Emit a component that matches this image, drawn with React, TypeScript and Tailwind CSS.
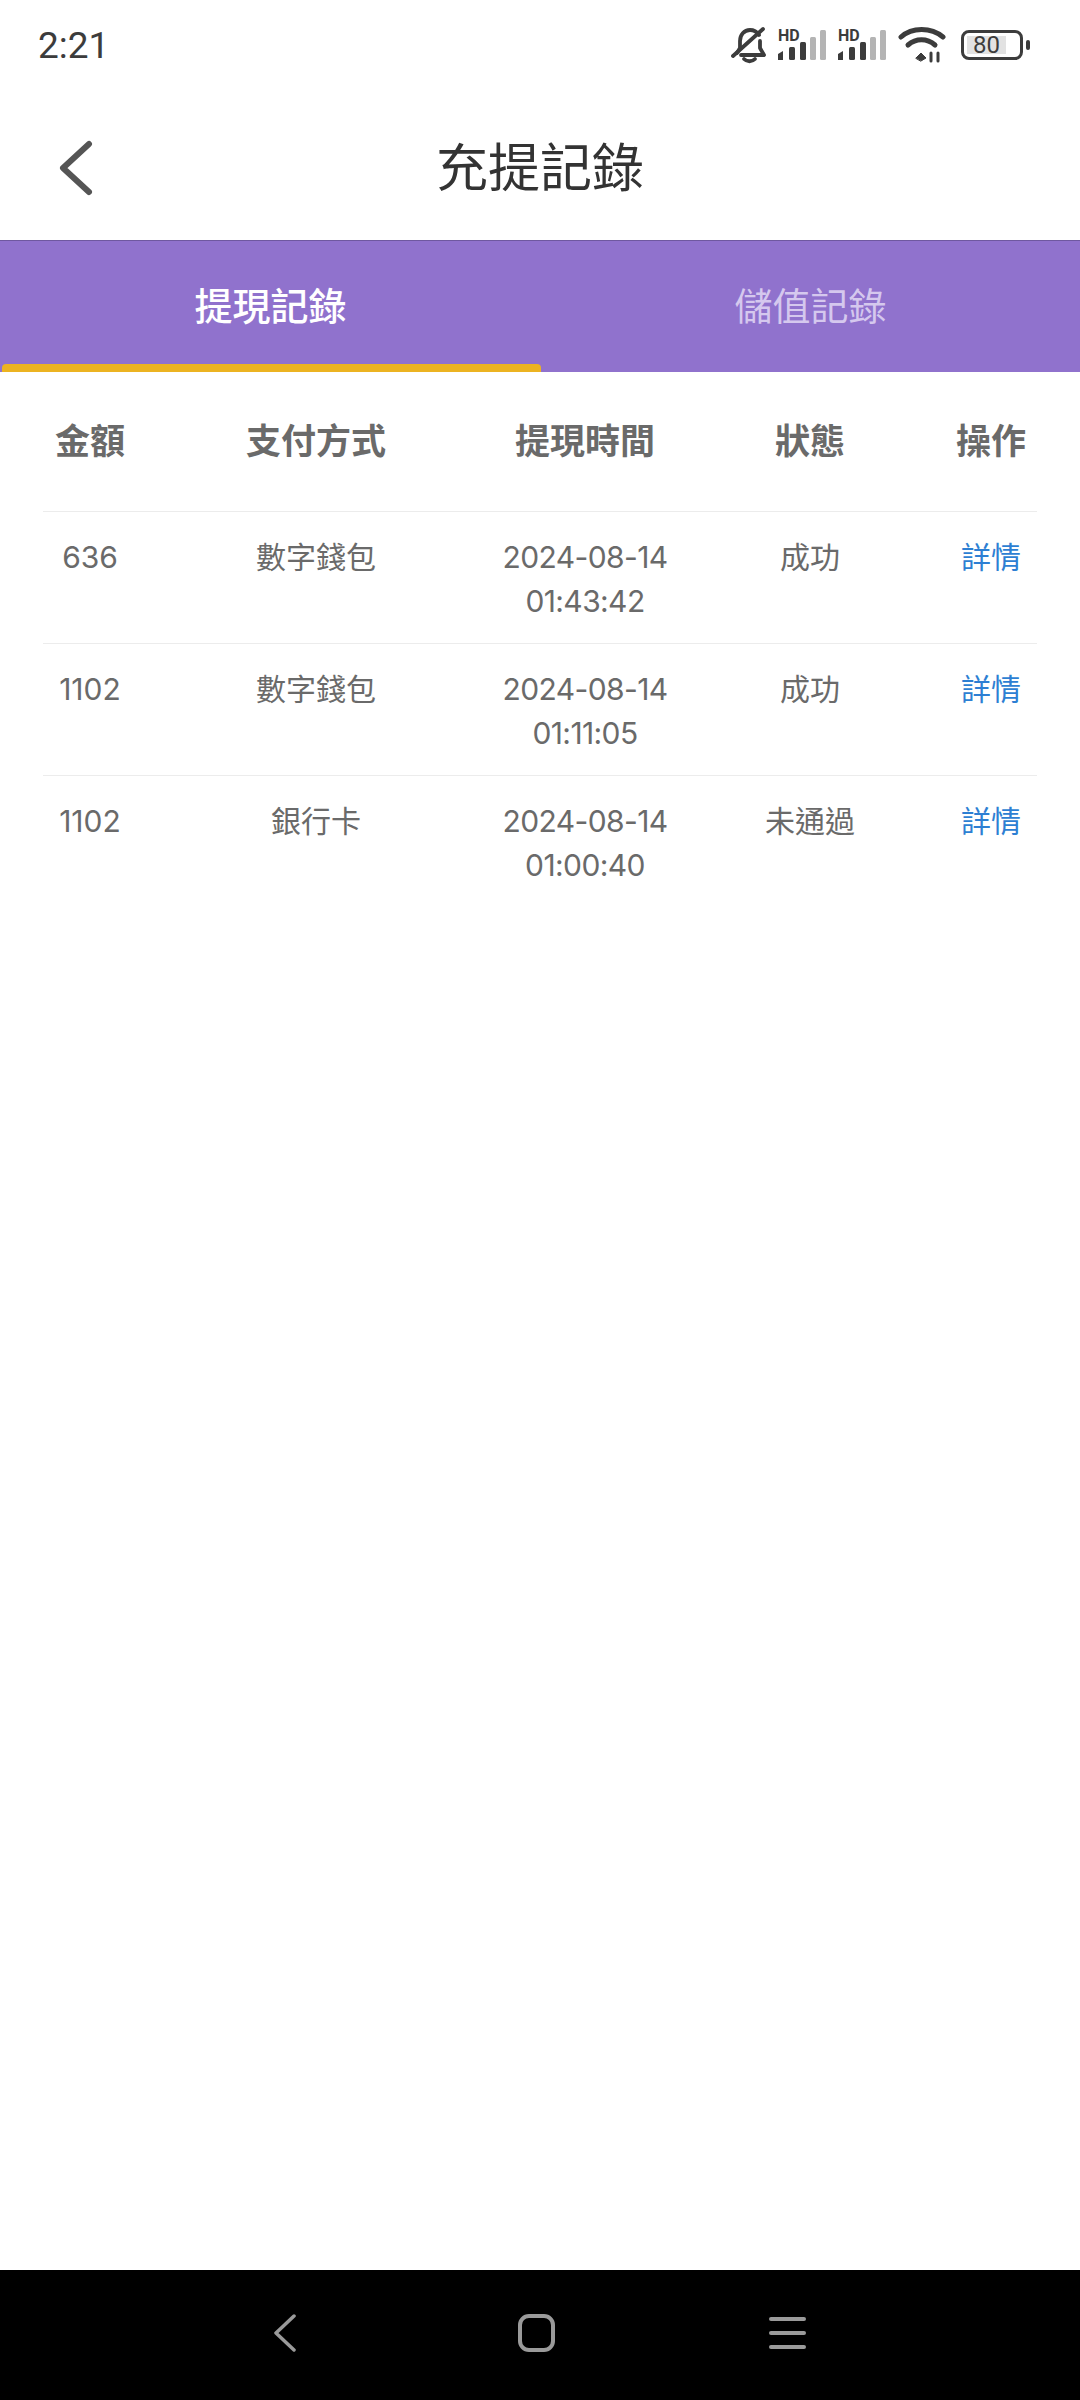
const cjk = "font-['Inter','Noto_Sans_CJK_TC',sans-serif]"

const records = [
  { amount: '636', method: '數字錢包', date: '2024-08-14', time: '01:43:42', status: '成功' },
  { amount: '1102', method: '數字錢包', date: '2024-08-14', time: '01:11:05', status: '成功' },
  { amount: '1102', method: '銀行卡', date: '2024-08-14', time: '01:00:40', status: '未通過' },
]

const columns = 'grid grid-cols-[94px_358px_180px_270px_92px] text-center'

function Signal() {
  return (
    <svg width="48" height="40" viewBox="0 -4 48 40" className="text-[#3c3c3c]">
      <text x="0" y="12" fontSize="16" fontWeight="700" fontFamily="Roboto, sans-serif" fill="currentColor">
        HD
      </text>
      <path d="M0 25 L5 22 V31 H0 Z" fill="currentColor" />
      <rect x="11" y="18" width="6" height="13" rx="1.5" fill="currentColor" />
      <rect x="22" y="13" width="6" height="18" rx="1.5" fill="currentColor" />
      <rect x="32" y="8" width="6" height="23" rx="1.5" fill="#b4b4b4" />
      <rect x="42" y="1" width="6" height="30" rx="1.5" fill="#b4b4b4" />
    </svg>
  )
}

function StatusBar() {
  return (
    <div className="flex h-[90px] items-center justify-between pl-[38px] pr-[50px] text-[#3c3c3c]">
      <span className="font-['Roboto',sans-serif] text-[37px] leading-none">2:21</span>
      <div className="flex items-center">
        <svg width="36" height="38" viewBox="0 0 36 38" fill="none" stroke="currentColor" strokeWidth="3.8" strokeLinecap="round" strokeLinejoin="round">
          <path d="M6 27 L9 22 V15 C9 9 13 4 19 4 C23 4 26 6 28 9 M29 15 V22 L33 29 H10" />
          <path d="M13 33 C16 36 21 36 24 33" />
          <path d="M2 30 L32 3" />
        </svg>
        <div className="ml-[11px] flex gap-3">
          <Signal />
          <Signal />
        </div>
        <svg width="48" height="36" viewBox="0 0 48 36" className="ml-[12px]" fill="none" stroke="currentColor" strokeWidth="5" strokeLinecap="round">
          <path d="M3 10 C14 0 33 0 45 10" />
          <path d="M10 18 C18 11 29 11 37 18" />
          <path d="M18 31 L23 26 L28 31 L23 34 Z" fill="currentColor" strokeWidth="1" stroke="currentColor" />
          <path d="M33 26 V34 M40 26 V34" strokeWidth="3" />
        </svg>
        <div className="ml-[15px] flex items-center">
          <div className="flex h-[30px] w-[62px] items-center rounded-[8px] border-[3px] border-[#3c3c3c] pl-[3px]">
            <div className="flex h-[18px] w-[39px] items-center justify-center bg-[#e2e2e2] font-['Roboto',sans-serif] text-[24px] leading-none">80</div>
          </div>
          <div className="ml-[3px] h-[10px] w-[4px] rounded-full bg-[#3c3c3c]" />
        </div>
      </div>
    </div>
  )
}

function TopBar() {
  return (
    <div className="relative flex h-[150px] items-center justify-center pt-[8px]">
      <svg width="36" height="56" viewBox="0 0 36 56" fill="none" stroke="#555" strokeWidth="6" strokeLinecap="round" strokeLinejoin="round" className="absolute left-[58px] top-[50px]">
        <path d="M31 4 L5 28 L31 52" />
      </svg>
      <h1 className="text-[52px] font-normal leading-none text-[#333]">充提記錄</h1>
    </div>
  )
}

function Tabs() {
  return (
    <div className="flex h-[132px] border-t border-[#6f58a0] bg-[#9072cd]">
      <div className="relative flex w-[541px] items-center justify-center text-[38px] font-medium text-white">
        提現記錄
        <div className="absolute bottom-0 left-[2px] right-0 h-[8px] rounded-t-[4px] bg-[#ecb321]" />
      </div>
      <div className="flex flex-1 items-center justify-center text-[38px] text-[#d5c8ee]">儲值記錄</div>
    </div>
  )
}

function RecordTable() {
  return (
    <div className="mx-[43px] w-[994px]">
      <div className={`${columns} h-[139px] items-center text-[35px] font-bold text-[#6a6a6a]`}>
        <div>金額</div>
        <div>支付方式</div>
        <div className="whitespace-nowrap">提現時間</div>
        <div>狀態</div>
        <div>操作</div>
      </div>
      {records.map((r, i) => (
        <div key={i} className={`${columns} h-[132px] border-t border-[#ececec] pt-[23px] text-[30px] leading-[44px] text-[#6a6a6a]`}>
          <div>{r.amount}</div>
          <div>{r.method}</div>
          <div className="tracking-[-0.6px]">
            {r.date}
            <br />
            {r.time}
          </div>
          <div>{r.status}</div>
          <div className="text-[#2d7fd3]">詳情</div>
        </div>
      ))}
    </div>
  )
}

function NavBar() {
  return (
    <div className="flex h-[130px] items-center justify-between bg-black pb-[4px] pl-[273px] pr-[274px]">
      <svg width="24" height="38" viewBox="0 0 24 38" fill="none" stroke="#9a9a9a" strokeWidth="3.5" strokeLinecap="round" strokeLinejoin="round">
        <path d="M21 2 L3 19 L21 36" />
      </svg>
      <div className="ml-[7px] h-[38px] w-[37px] rounded-[11px] border-[4px] border-[#9a9a9a]" />
      <div className="flex w-[37px] flex-col gap-[10px]">
        <div className="h-[4px] rounded-full bg-[#9a9a9a]" />
        <div className="h-[4px] rounded-full bg-[#9a9a9a]" />
        <div className="h-[4px] rounded-full bg-[#9a9a9a]" />
      </div>
    </div>
  )
}

export default function App() {
  return (
    <div className={`flex h-[2400px] w-[1080px] flex-col bg-white ${cjk}`}>
      <StatusBar />
      <TopBar />
      <Tabs />
      <main className="flex-1">
        <RecordTable />
      </main>
      <NavBar />
    </div>
  )
}
